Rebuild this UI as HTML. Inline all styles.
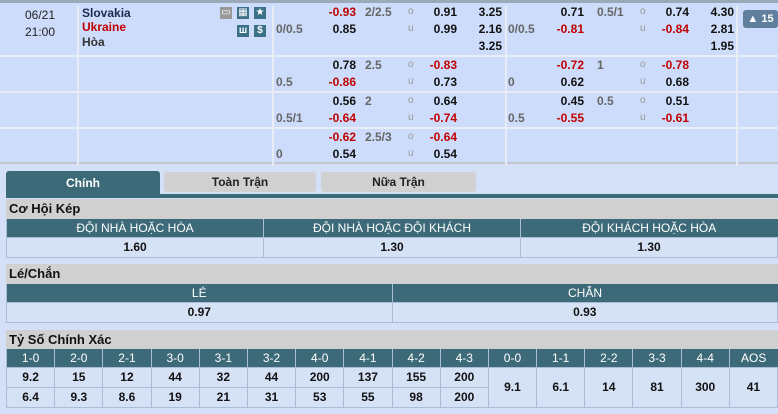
<!DOCTYPE html>
<html><head><meta charset="utf-8"><style>
*{margin:0;padding:0;box-sizing:border-box}
body{width:778px;height:414px;overflow:hidden;background:#d4e0f8;font-family:"Liberation Sans","DejaVu Sans",sans-serif;font-size:12px;position:relative}
.a{position:absolute;white-space:nowrap;line-height:14px}
.b{font-weight:bold;color:#111}
.r{color:#c00000}
.g{color:#666;font-weight:bold}
.o{color:#999;font-size:10px}
.rt{text-align:right;width:40px}
.top{position:absolute;left:0;top:0;width:778px;height:164px;background:#cddcfa;border-top:3px solid #9aaab8;border-bottom:2px solid #c4c8d0}
.hl{position:absolute;left:0;width:778px;height:2px;background:#e8ecf4}
.vl{position:absolute;top:3px;width:2px;height:160px;background:#e8ecf4}
.ic{position:absolute;width:12px;height:12px;background:#3a7088;color:#fff;font-size:10px;font-weight:bold;text-align:center;line-height:12px}
table{border-collapse:collapse;position:absolute;left:6px;width:772px;table-layout:fixed}
td{text-align:center;font-weight:bold;font-size:12px;border:1px solid #a9bcd8}
th{background:#3d6a78;color:#fff;font-weight:normal;font-size:12px;border-left:1px solid #a9bcd8;height:18px}
td{background:#d5e2f6;color:#111}
.sec{position:absolute;left:6px;width:772px;height:20px;background:#d0d0d0;font-weight:bold;font-size:13px;color:#111;padding:2px 3px;line-height:16px}
</style></head><body>
<div class="top">
<div class="hl" style="top:52px"></div><div class="hl" style="top:88px"></div><div class="hl" style="top:124px"></div>
<div class="vl" style="left:77px"></div><div class="vl" style="left:272px"></div><div class="vl" style="left:505px"></div><div class="vl" style="left:736px"></div>
</div>
<div class="a" style="left:25px;top:8px;color:#222">06/21</div>
<div class="a" style="left:25px;top:25px;color:#222">21:00</div>
<div class="a b" style="left:82px;top:6px;color:#1a2a50">Slovakia</div>
<div class="a b" style="left:82px;top:20px;color:#c00000">Ukraine</div>
<div class="a" style="left:82px;top:35px;color:#333;font-weight:bold">Hòa</div>
<div class="ic" style="left:220px;top:7px;background:#999">▭</div>
<div class="ic" style="left:237px;top:7px">▦</div>
<div class="ic" style="left:254px;top:7px">★</div>
<div class="ic" style="left:237px;top:25px">ш</div>
<div class="ic" style="left:254px;top:25px">$</div>

<!-- col 1 -->
<div class="a g" style="left:276px;top:22px">0/0.5</div>
<div class="a b r rt" style="left:316px;top:5px">-0.93</div>
<div class="a b rt" style="left:316px;top:22px">0.85</div>
<div class="a g" style="left:365px;top:5px">2/2.5</div>
<div class="a o" style="left:408px;top:5px">o</div><div class="a o" style="left:408px;top:22px">u</div>
<div class="a b rt" style="left:417px;top:5px">0.91</div>
<div class="a b rt" style="left:417px;top:22px">0.99</div>
<div class="a b rt" style="left:462px;top:5px">3.25</div>
<div class="a b rt" style="left:462px;top:22px">2.16</div>
<div class="a b rt" style="left:462px;top:39px">3.25</div>

<div class="a b rt" style="left:316px;top:58px">0.78</div>
<div class="a g" style="left:365px;top:58px">2.5</div>
<div class="a g" style="left:276px;top:75px">0.5</div>
<div class="a b r rt" style="left:316px;top:75px">-0.86</div>
<div class="a o" style="left:408px;top:58px">o</div><div class="a o" style="left:408px;top:75px">u</div>
<div class="a b r rt" style="left:417px;top:58px">-0.83</div>
<div class="a b rt" style="left:417px;top:75px">0.73</div>

<div class="a b rt" style="left:316px;top:94px">0.56</div>
<div class="a g" style="left:365px;top:94px">2</div>
<div class="a g" style="left:276px;top:111px">0.5/1</div>
<div class="a b r rt" style="left:316px;top:111px">-0.64</div>
<div class="a o" style="left:408px;top:94px">o</div><div class="a o" style="left:408px;top:111px">u</div>
<div class="a b rt" style="left:417px;top:94px">0.64</div>
<div class="a b r rt" style="left:417px;top:111px">-0.74</div>

<div class="a b r rt" style="left:316px;top:130px">-0.62</div>
<div class="a g" style="left:365px;top:130px">2.5/3</div>
<div class="a g" style="left:276px;top:147px">0</div>
<div class="a b rt" style="left:316px;top:147px">0.54</div>
<div class="a o" style="left:408px;top:130px">o</div><div class="a o" style="left:408px;top:147px">u</div>
<div class="a b r rt" style="left:417px;top:130px">-0.64</div>
<div class="a b rt" style="left:417px;top:147px">0.54</div>

<!-- col 2 -->
<div class="a g" style="left:508px;top:22px">0/0.5</div>
<div class="a b rt" style="left:544px;top:5px">0.71</div>
<div class="a b r rt" style="left:544px;top:22px">-0.81</div>
<div class="a g" style="left:597px;top:5px">0.5/1</div>
<div class="a o" style="left:640px;top:5px">o</div><div class="a o" style="left:640px;top:22px">u</div>
<div class="a b rt" style="left:649px;top:5px">0.74</div>
<div class="a b r rt" style="left:649px;top:22px">-0.84</div>
<div class="a b rt" style="left:694px;top:5px">4.30</div>
<div class="a b rt" style="left:694px;top:22px">2.81</div>
<div class="a b rt" style="left:694px;top:39px">1.95</div>

<div class="a b r rt" style="left:544px;top:58px">-0.72</div>
<div class="a g" style="left:597px;top:58px">1</div>
<div class="a g" style="left:508px;top:75px">0</div>
<div class="a b rt" style="left:544px;top:75px">0.62</div>
<div class="a o" style="left:640px;top:58px">o</div><div class="a o" style="left:640px;top:75px">u</div>
<div class="a b r rt" style="left:649px;top:58px">-0.78</div>
<div class="a b rt" style="left:649px;top:75px">0.68</div>

<div class="a b rt" style="left:544px;top:94px">0.45</div>
<div class="a g" style="left:597px;top:94px">0.5</div>
<div class="a g" style="left:508px;top:111px">0.5</div>
<div class="a b r rt" style="left:544px;top:111px">-0.55</div>
<div class="a o" style="left:640px;top:94px">o</div><div class="a o" style="left:640px;top:111px">u</div>
<div class="a b rt" style="left:649px;top:94px">0.51</div>
<div class="a b r rt" style="left:649px;top:111px">-0.61</div>

<div class="a" style="left:743px;top:10px;width:35px;height:18px;background:#5f7f9c;border-radius:3px;color:#fff;font-weight:bold;font-size:11px;text-align:center;line-height:18px">▲ 15</div>

<!-- tabs -->
<div class="a" style="left:6px;top:171px;width:154px;height:24px;background:#3d6a78;color:#fff;font-weight:bold;text-align:center;line-height:24px;border-radius:3px 3px 0 0">Chính</div>
<div class="a" style="left:164px;top:172px;width:152px;height:20px;background:#d0d0d0;color:#222;font-weight:bold;text-align:center;line-height:20px;border-radius:3px">Toàn Trận</div>
<div class="a" style="left:321px;top:172px;width:155px;height:20px;background:#d0d0d0;color:#222;font-weight:bold;text-align:center;line-height:20px;border-radius:3px">Nữa Trận</div>
<div class="a" style="left:6px;top:194px;width:772px;height:4px;background:#3d6a78"></div>

<div class="sec" style="top:199px">Cơ Hội Kép</div>
<table style="top:219px"><tr><th>ĐỘI NHÀ HOẶC HÒA</th><th>ĐỘI NHÀ HOẶC ĐỘI KHÁCH</th><th>ĐỘI KHÁCH HOẶC HÒA</th></tr>
<tr><td style="height:20px">1.60</td><td>1.30</td><td>1.30</td></tr></table>

<div class="sec" style="top:264px">Lé/Chắn</div>
<table style="top:284px"><tr><th>LÉ</th><th>CHẴN</th></tr>
<tr><td style="height:20px">0.97</td><td>0.93</td></tr></table>

<div class="sec" style="top:330px">Tỷ Số Chính Xác</div>
<table style="top:349px"><tr><th>1-0</th><th>2-0</th><th>2-1</th><th>3-0</th><th>3-1</th><th>3-2</th><th>4-0</th><th>4-1</th><th>4-2</th><th>4-3</th><th>0-0</th><th>1-1</th><th>2-2</th><th>3-3</th><th>4-4</th><th>AOS</th></tr>
<tr><td style="height:20px">9.2</td><td>15</td><td>12</td><td>44</td><td>32</td><td>44</td><td>200</td><td>137</td><td>155</td><td>200</td><td rowspan="2">9.1</td><td rowspan="2">6.1</td><td rowspan="2">14</td><td rowspan="2">81</td><td rowspan="2">300</td><td rowspan="2">41</td></tr>
<tr><td style="height:20px">6.4</td><td>9.3</td><td>8.6</td><td>19</td><td>21</td><td>31</td><td>53</td><td>55</td><td>98</td><td>200</td></tr></table>
</body></html>
